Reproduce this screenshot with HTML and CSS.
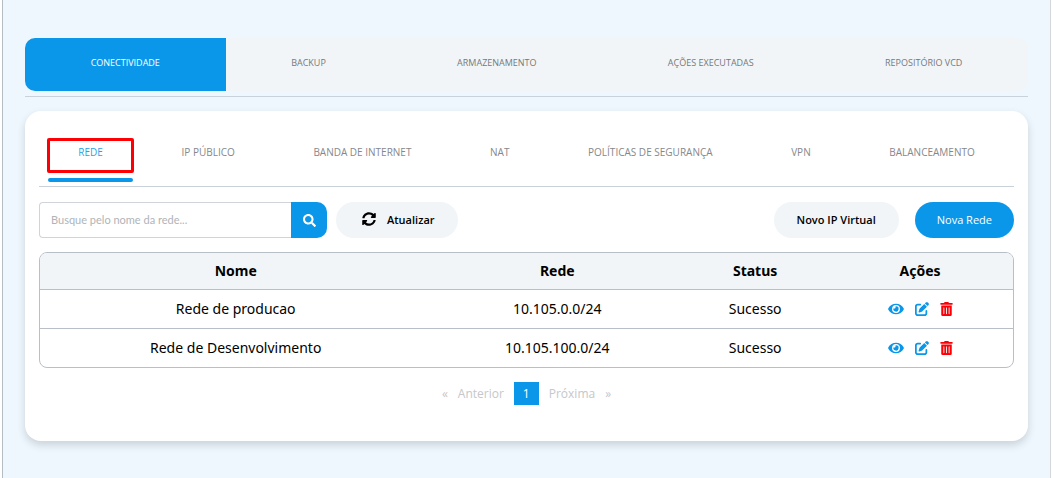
FILE: index.html
```
<!DOCTYPE html>
<html lang="pt-BR">
<head>
<meta charset="UTF-8">
<meta name="viewport" content="width=device-width, initial-scale=1.0">
<title>Conectividade - Redes</title>
<link rel="stylesheet" href="styles.css">
</head>
<body>
<svg class="sprite" aria-hidden="true">
    <symbol id="icon-search" viewBox="0 0 512 512">
        <path d="M505 442.700 405.300 343c-4.500-4.500-10.600-7-17-7H372c27.600-35.300 44-79.700 44-128C416 93.100 322.900 0 208 0S0 93.100 0 208s93.100 208 208 208c48.300 0 92.700-16.400 128-44v16.300c0 6.400 2.500 12.500 7 17l99.700 99.700c9.400 9.400 24.600 9.400 33.900 0l28.300-28.300c9.400-9.400 9.400-24.600.1-34zM208 336c-70.700 0-128-57.200-128-128 0-70.700 57.200-128 128-128 70.700 0 128 57.200 128 128 0 70.700-57.200 128-128 128z"/>
    </symbol>
    <symbol id="icon-sync" viewBox="0 0 512 512">
        <path d="M370.700 133.300C339.500 104 298.900 88 255.800 88c-77.500.1-144.300 53.200-162.800 126.900-1.300 5.400-6.100 9.100-11.700 9.100H24.100c-7.500 0-13.200-6.800-11.800-14.200C33.900 94.900 134.800 8 256 8c66.400 0 126.800 26.100 171.300 68.700L463 41c15.100-15.100 41-4.400 41 17v134c0 13.300-10.700 24-24 24H346c-21.400 0-32.100-25.900-17-41zM32 296h134c21.400 0 32.100 25.900 17 41l-41.800 41.800c31.300 29.300 71.800 45.300 114.900 45.300 77.400-.1 144.300-53.100 162.800-126.800 1.300-5.400 6.100-9.100 11.700-9.100h57.300c7.500 0 13.200 6.800 11.800 14.200C478.100 417.100 377.200 504 256 504c-66.400 0-126.800-26.100-171.300-68.700L49 471c-15.100 15.100-41 4.400-41-17V320c0-13.300 10.700-24 24-24z"/>
    </symbol>
    <symbol id="icon-eye" viewBox="0 0 576 512">
        <path d="M572.500 241.400C518.300 135.600 410.900 64 288 64S57.700 135.600 3.500 241.400a32.400 32.400 0 0 0 0 29.200C57.700 376.400 165.100 448 288 448s230.300-71.600 284.500-177.400a32.400 32.400 0 0 0 0-29.200zM288 400a144 144 0 1 1 144-144 143.900 143.900 0 0 1-144 144zm0-240a95.300 95.300 0 0 0-25.300 3.800 47.900 47.900 0 0 1-66.900 66.900A95.800 95.800 0 1 0 288 160z"/>
    </symbol>
    <symbol id="icon-edit" viewBox="0 0 512 512">
        <path d="M471.600 21.700c-21.900-21.900-57.300-21.900-79.200 0L362.300 51.700l97.900 97.900 30.100-30.100c21.900-21.900 21.900-57.300 0-79.200zM172.400 241.700c-6.100 6.100-10.800 13.600-13.500 21.900l-29.600 88.800c-2.900 8.600-.6 18.100 5.800 24.600s15.900 8.700 24.600 5.800l88.800-29.600c8.200-2.700 15.700-7.400 21.900-13.500L437.700 172.300 339.700 74.300zM96 64c-53 0-96 43-96 96v256c0 53 43 96 96 96h256c53 0 96-43 96-96v-96c0-17.700-14.300-32-32-32s-32 14.300-32 32v96c0 17.700-14.300 32-32 32H96c-17.700 0-32-14.300-32-32V160c0-17.700 14.300-32 32-32h96c17.700 0 32-14.300 32-32s-14.300-32-32-32z"/>
    </symbol>
    <symbol id="icon-trash" viewBox="0 0 448 512">
        <path d="M32 464a48 48 0 0 0 48 48h288a48 48 0 0 0 48-48V128H32zm272-256a16 16 0 0 1 32 0v224a16 16 0 0 1-32 0zm-96 0a16 16 0 0 1 32 0v224a16 16 0 0 1-32 0zm-96 0a16 16 0 0 1 32 0v224a16 16 0 0 1-32 0zM432 32H312l-9.400-18.700A24 24 0 0 0 281.100 0H166.800a23.700 23.700 0 0 0-21.400 13.300L136 32H16A16 16 0 0 0 0 48v32a16 16 0 0 0 16 16h416a16 16 0 0 0 16-16V48a16 16 0 0 0-16-16z"/>
    </symbol>
</svg>

<main class="page">
    <nav class="main-tabs">
        <a href="#" class="active">CONECTIVIDADE</a>
        <a href="#">BACKUP</a>
        <a href="#">ARMAZENAMENTO</a>
        <a href="#">AÇÕES EXECUTADAS</a>
        <a href="#">REPOSITÓRIO VCD</a>
    </nav>

    <section class="card">
        <nav class="sub-tabs">
            <a href="#" class="active">REDE</a>
            <a href="#">IP PÚBLICO</a>
            <a href="#">BANDA DE INTERNET</a>
            <a href="#">NAT</a>
            <a href="#">POLÍTICAS DE SEGURANÇA</a>
            <a href="#">VPN</a>
            <a href="#">BALANCEAMENTO</a>
        </nav>

        <div class="toolbar">
            <form class="search">
                <input type="text" placeholder="Busque pelo nome da rede..." aria-label="Busque pelo nome da rede">
                <button type="button" aria-label="Buscar"><svg><use href="#icon-search"/></svg></button>
            </form>
            <button type="button" class="btn"><svg><use href="#icon-sync"/></svg>Atualizar</button>
            <div class="toolbar-right">
                <button type="button" class="btn">Novo IP Virtual</button>
                <button type="button" class="btn btn-primary">Nova Rede</button>
            </div>
        </div>

        <table>
            <thead>
                <tr>
                    <th>Nome</th>
                    <th>Rede</th>
                    <th>Status</th>
                    <th>Ações</th>
                </tr>
            </thead>
            <tbody>
                <tr>
                    <td>Rede de producao</td>
                    <td>10.105.0.0/24</td>
                    <td>Sucesso</td>
                    <td>
                        <div class="actions">
                            <button type="button" aria-label="Visualizar"><svg class="eye"><use href="#icon-eye"/></svg></button>
                            <button type="button" aria-label="Editar"><svg><use href="#icon-edit"/></svg></button>
                            <button type="button" class="delete" aria-label="Excluir"><svg><use href="#icon-trash"/></svg></button>
                        </div>
                    </td>
                </tr>
                <tr>
                    <td>Rede de Desenvolvimento</td>
                    <td>10.105.100.0/24</td>
                    <td>Sucesso</td>
                    <td>
                        <div class="actions">
                            <button type="button" aria-label="Visualizar"><svg class="eye"><use href="#icon-eye"/></svg></button>
                            <button type="button" aria-label="Editar"><svg><use href="#icon-edit"/></svg></button>
                            <button type="button" class="delete" aria-label="Excluir"><svg><use href="#icon-trash"/></svg></button>
                        </div>
                    </td>
                </tr>
            </tbody>
        </table>

        <nav class="pagination">
            <a href="#" aria-label="Primeira">«</a>
            <a href="#">Anterior</a>
            <a href="#" class="current">1</a>
            <a href="#">Próxima</a>
            <a href="#" aria-label="Última">»</a>
        </nav>
    </section>
</main>
</body>
</html>
```
FILE: styles.css
```
* {
    box-sizing: border-box;
}
body {
    margin: 0;
    background-color: #fff;
    font-family: "Open Sans", "Noto Sans", sans-serif;
    color: #000;
}
a {
    text-decoration: none;
}
button {
    font-family: inherit;
    border: none;
    cursor: pointer;
}
svg {
    display: block;
    fill: currentColor;
}
.sprite {
    display: none;
}
.page {
    min-height: 100vh;
    margin: 0 1px 0 2px;
    padding: 38px 22px;
    background-color: #eef7fe;
    border-left: 1px solid #b5bcc2;
    border-right: 1px solid #d5d8da;
}

/* abas principais */
.main-tabs {
    display: flex;
    padding-bottom: 5px;
    border-bottom: 1px solid #c9d1da;
}
.main-tabs a {
    flex: 1 1 auto;
    padding: 16px 0 20px;
    background-color: #f1f5f8;
    color: #75797c;
    font-size: 9px;
    line-height: 17px;
    text-align: center;
}
.main-tabs a:last-child {
    border-radius: 0 10px 10px 0;
}
.main-tabs a.active {
    background-color: #0a97ea;
    color: #fff;
    border-radius: 10px 0 0 10px;
}

.card {
    margin-top: 14px;
    padding: 27px 14px 36px;
    background-color: #fff;
    border-radius: 16px;
    box-shadow: 0 4px 8px rgba(0, 0, 0, 0.15);
}

/* abas internas */
.sub-tabs {
    display: flex;
    padding-bottom: 4px;
    border-bottom: 1px solid #c9d1da;
}
.sub-tabs a {
    position: relative;
    flex: 1 1 auto;
    margin: 0 9px;
    padding: 6px 0 17px;
    color: #85888b;
    font-size: 10px;
    line-height: 17px;
    text-align: center;
    border-bottom: 4px solid transparent;
}
.sub-tabs a.active {
    color: #2f9fe0;
}
.sub-tabs a.active::before {
    content: "";
    position: absolute;
    inset: 0 -1px 5px -1px;
    border: 3px solid #fd0006;
    border-radius: 2px;
}
.sub-tabs a.active::after {
    content: "";
    position: absolute;
    inset: auto 0 -4px 0;
    height: 4px;
    background-color: #0a97ea;
    border-radius: 2px;
}

.toolbar {
    display: flex;
    align-items: center;
    gap: 9px;
    margin: 15px 0 14px;
}
.search {
    display: flex;
}
.search input {
    width: 252px;
    height: 36px;
    padding: 0 11px 2px;
    border: 1px solid #ced4da;
    border-right: none;
    border-radius: 4px 0 0 4px;
    font-family: Lato, sans-serif;
    font-size: 11px;
}
.search input::placeholder {
    color: #b0b4b8;
}
.search button {
    width: 36px;
    padding: 0 12px;
    background-color: #0a97ea;
    color: #fff;
    border-radius: 0 10px 10px 0;
}
.search svg {
    width: 13px;
    height: 13px;
}
.btn {
    display: flex;
    align-items: center;
    gap: 11px;
    height: 36px;
    padding: 0 23px 2px;
    background-color: #f1f5f8;
    color: #000;
    border-radius: 18px;
    font-size: 11px;
    font-weight: 600;
}
.btn svg {
    width: 14px;
    height: 14px;
    margin-left: 3px;
}
.btn-primary {
    padding: 0 22px 2px;
    background-color: #0a97ea;
    color: #fff;
    font-weight: 500;
}
.toolbar-right {
    display: flex;
    gap: 16px;
    margin-left: auto;
}

table {
    width: 100%;
    border: 1px solid #b9bfc7;
    border-radius: 8px;
    border-spacing: 0;
    overflow: hidden;
    font-family: "Noto Sans", "Open Sans", sans-serif;
    font-size: 14px;
    line-height: 20px;
    text-align: center;
}
th {
    padding: 8px;
    background-color: #f1f5f8;
}
td {
    padding: 9px 8px;
    border-top: 1px solid #b9bfc7;
}
.actions {
    display: flex;
    justify-content: center;
    gap: 11px;
    padding: 0 4px;
}
.actions button {
    padding: 0;
    background: none;
    color: #0a97ea;
}
.actions svg {
    width: 14px;
    height: 14px;
}
.actions .eye {
    width: 16px;
}
.actions .delete {
    color: #fd0006;
}
.actions .delete svg {
    width: 13px;
}

.pagination {
    display: flex;
    justify-content: center;
    gap: 10px;
    margin-top: 14px;
    font-size: 12px;
    line-height: 23px;
}
.pagination a {
    color: #c5c7c9;
}
.pagination .current {
    padding: 0 9px;
    background-color: #0a97ea;
    color: #fff;
}
```
